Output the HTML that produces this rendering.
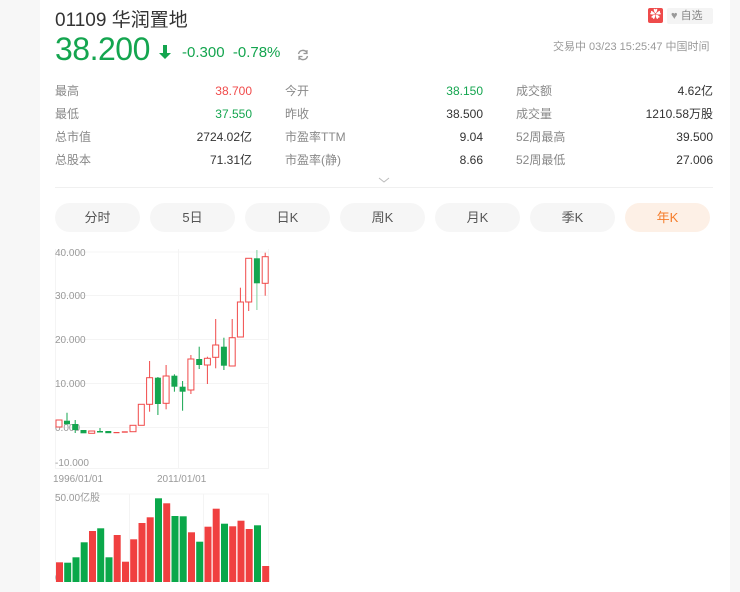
<!DOCTYPE html>
<html><head><meta charset="utf-8"><style>
*{margin:0;padding:0;box-sizing:border-box}
body{width:740px;height:592px;background:#f7f7f7;font-family:"Liberation Sans","Noto Sans CJK SC",sans-serif;position:relative;overflow:hidden}
.card{position:absolute;left:40px;top:0;width:690px;height:592px;background:#fff}
.abs{position:absolute;white-space:nowrap}
.g{color:#14a54f}.r{color:#f04a4a}
.lab{color:#888;font-size:12px;line-height:16px;height:16px}
.val{color:#333;font-size:12px;text-align:right;line-height:16px;height:16px}
.tab{position:absolute;top:203px;width:85px;height:29px;border-radius:15px;background:#f6f6f6;color:#555;font-size:13px;text-align:center;line-height:29px}
</style></head><body>
<div class="card"></div>
<div class="abs" style="left:55px;top:5px;font-size:19px;color:#333">01109 华润置地</div>
<div class="abs g" style="left:55px;top:31px;font-size:32px;letter-spacing:-0.5px">38.200</div>
<svg class="abs" style="left:158px;top:44px" width="14" height="16"><path d="M5 1h4v8h4l-6 6-6-6h4z" fill="#14a54f"/></svg>
<div class="abs g" style="left:182px;top:44px;font-size:15px">-0.300&nbsp;&nbsp;-0.78%</div>
<svg class="abs" style="left:296px;top:48px" width="14" height="14"><path d="M2.5 6A4.5 4.5 0 0 1 11 5M11.5 8A4.5 4.5 0 0 1 3 9" stroke="#999" stroke-width="1.4" fill="none"/><path d="M11 2v3.5H7.5M3 12V8.5h3.5" stroke="#999" stroke-width="1.2" fill="none"/></svg>
<div class="abs" style="left:648px;top:8px;width:15px;height:15px;background:#ee4b4b;border-radius:2px;color:#fff;font-size:11px;text-align:center;line-height:15px">✿</div>
<div class="abs" style="left:667px;top:8px;width:46px;height:16px;background:#f4f4f4;border-radius:2px;color:#888;font-size:11px;line-height:16px;padding-left:4px"><span style="color:#999">♥</span> 自选</div>
<div class="abs" style="left:553px;top:38px;font-size:11px;color:#999">交易中 03/23 15:25:47 中国时间</div>

<div class="abs lab" style="left:55px;top:83px">最高</div><div class="abs val" style="left:152px;top:83px;width:100px;color:#f04a4a">38.700</div>
<div class="abs lab" style="left:55px;top:106px">最低</div><div class="abs val" style="left:152px;top:106px;width:100px;color:#14a54f">37.550</div>
<div class="abs lab" style="left:55px;top:129px">总市值</div><div class="abs val" style="left:152px;top:129px;width:100px">2724.02亿</div>
<div class="abs lab" style="left:55px;top:152px">总股本</div><div class="abs val" style="left:152px;top:152px;width:100px">71.31亿</div>

<div class="abs lab" style="left:285px;top:83px">今开</div><div class="abs val" style="left:383px;top:83px;width:100px;color:#14a54f">38.150</div>
<div class="abs lab" style="left:285px;top:106px">昨收</div><div class="abs val" style="left:383px;top:106px;width:100px">38.500</div>
<div class="abs lab" style="left:285px;top:129px">市盈率TTM</div><div class="abs val" style="left:383px;top:129px;width:100px">9.04</div>
<div class="abs lab" style="left:285px;top:152px">市盈率(静)</div><div class="abs val" style="left:383px;top:152px;width:100px">8.66</div>

<div class="abs lab" style="left:516px;top:83px">成交额</div><div class="abs val" style="left:613px;top:83px;width:100px">4.62亿</div>
<div class="abs lab" style="left:516px;top:106px">成交量</div><div class="abs val" style="left:593px;top:106px;width:120px">1210.58万股</div>
<div class="abs lab" style="left:516px;top:129px">52周最高</div><div class="abs val" style="left:613px;top:129px;width:100px">39.500</div>
<div class="abs lab" style="left:516px;top:152px">52周最低</div><div class="abs val" style="left:613px;top:152px;width:100px">27.006</div>

<svg class="abs" style="left:378px;top:176px" width="12" height="8"><path d="M1 2l5 4 5-4" stroke="#bbb" fill="none"/></svg>
<div class="abs" style="left:55px;top:187px;width:658px;height:1px;background:#f0f0f0"></div>

<div class="tab" style="left:55px">分时</div>
<div class="tab" style="left:150px">5日</div>
<div class="tab" style="left:245px">日K</div>
<div class="tab" style="left:340px">周K</div>
<div class="tab" style="left:435px">月K</div>
<div class="tab" style="left:530px">季K</div>
<div class="tab" style="left:625px;background:#fdf0e6;color:#f57c2a">年K</div>

<svg class="abs" style="left:0;top:0" width="740" height="592" font-family="Liberation Sans,sans-serif">
<g stroke="#f4f4f4" stroke-width="1" fill="none">
<line x1="55" y1="252" x2="269" y2="252"/><line x1="55" y1="295.5" x2="269" y2="295.5"/><line x1="55" y1="339.5" x2="269" y2="339.5"/><line x1="55" y1="383.5" x2="269" y2="383.5"/><line x1="55" y1="427.5" x2="269" y2="427.5"/><line x1="55" y1="468.5" x2="269" y2="468.5"/>
<line x1="55.5" y1="249" x2="55.5" y2="469"/><line x1="178.5" y1="249" x2="178.5" y2="469"/><line x1="268.5" y1="249" x2="268.5" y2="469"/>
<line x1="55" y1="494" x2="269" y2="494"/><line x1="55.5" y1="494" x2="55.5" y2="582"/><line x1="129.5" y1="494" x2="129.5" y2="582"/><line x1="203.5" y1="494" x2="203.5" y2="582"/><line x1="268.5" y1="494" x2="268.5" y2="582"/>
</g>
<g fill="#999" font-size="10">
<text x="55" y="256">40.000</text><text x="55" y="299">30.000</text><text x="55" y="343">20.000</text><text x="55" y="387">10.000</text><text x="55" y="431">0.000</text><text x="55" y="466">-10.000</text>
<text x="53" y="482">1996/01/01</text><text x="157" y="482">2011/01/01</text>
<text x="55" y="501">50.00亿股</text><text x="55" y="581">0</text>
</g>
<g stroke-width="1">
<rect x="56" y="420" width="6" height="7" fill="#fff" stroke="#f04a4a"/>
<line x1="67" y1="412.7" x2="67" y2="420.7" stroke="#14a54f"/><rect x="64" y="420.7" width="6" height="3.6" fill="#14a54f"/>
<line x1="75.2" y1="420" x2="75.2" y2="433" stroke="#14a54f"/><rect x="72.2" y="424" width="6" height="6" fill="#14a54f"/>
<rect x="80.5" y="430" width="6" height="3.3" fill="#14a54f"/>
<rect x="88.7" y="431" width="6" height="2.3" fill="#fff" stroke="#f04a4a"/>
<line x1="100" y1="428" x2="100" y2="432" stroke="#14a54f"/><rect x="97" y="431" width="6" height="1.5" fill="#14a54f"/>
<rect x="105.3" y="431" width="6" height="2.2" fill="#14a54f"/>
<rect x="113.5" y="432" width="6" height="1.2" fill="#f04a4a"/>
<rect x="121.8" y="431.3" width="6" height="1.4" fill="#f04a4a"/>
<rect x="130" y="425.3" width="6" height="6.4" fill="#fff" stroke="#f04a4a"/>
<rect x="138.3" y="404.3" width="6" height="21" fill="#fff" stroke="#f04a4a"/>
<line x1="149.6" y1="361" x2="149.6" y2="411.7" stroke="#f04a4a"/><rect x="146.6" y="377.7" width="6" height="26.6" fill="#fff" stroke="#f04a4a"/>
<line x1="157.9" y1="377" x2="157.9" y2="415" stroke="#14a54f"/><rect x="154.9" y="377.7" width="6" height="26.3" fill="#14a54f"/>
<line x1="166.1" y1="365" x2="166.1" y2="409.3" stroke="#f04a4a"/><rect x="163.1" y="376" width="6" height="27.3" fill="#fff" stroke="#f04a4a"/>
<line x1="174.4" y1="374.3" x2="174.4" y2="391.7" stroke="#14a54f"/><rect x="171.4" y="375.7" width="6" height="11" fill="#14a54f"/>
<line x1="182.6" y1="381" x2="182.6" y2="410.7" stroke="#14a54f"/><rect x="179.6" y="386.7" width="6" height="5" fill="#14a54f"/>
<line x1="190.9" y1="355" x2="190.9" y2="394" stroke="#f04a4a"/><rect x="187.9" y="359" width="6" height="31" fill="#fff" stroke="#f04a4a"/>
<line x1="199.2" y1="346.7" x2="199.2" y2="369" stroke="#14a54f"/><rect x="196.2" y="359" width="6" height="6" fill="#14a54f"/>
<line x1="207.4" y1="356.7" x2="207.4" y2="384" stroke="#f04a4a"/><rect x="204.4" y="358.3" width="6" height="6.7" fill="#fff" stroke="#f04a4a"/>
<line x1="215.7" y1="319" x2="215.7" y2="368.3" stroke="#f04a4a"/><rect x="212.7" y="345" width="6" height="12.3" fill="#fff" stroke="#f04a4a"/>
<line x1="223.9" y1="337.7" x2="223.9" y2="370" stroke="#14a54f"/><rect x="220.9" y="346.7" width="6" height="19" fill="#14a54f"/>
<line x1="232.2" y1="319" x2="232.2" y2="337.7" stroke="#f04a4a"/><rect x="229.2" y="337.7" width="6" height="28.3" fill="#fff" stroke="#f04a4a"/>
<line x1="240.4" y1="287.7" x2="240.4" y2="302" stroke="#f04a4a"/><rect x="237.4" y="302" width="6" height="35" fill="#fff" stroke="#f04a4a"/>
<line x1="248.7" y1="302" x2="248.7" y2="311" stroke="#f04a4a"/><rect x="245.7" y="258.3" width="6" height="43.7" fill="#fff" stroke="#f04a4a"/>
<line x1="256.9" y1="250" x2="256.9" y2="310" stroke="#7fd19f"/><rect x="253.9" y="258.3" width="6" height="25" fill="#14a54f"/>
<line x1="265.2" y1="252.7" x2="265.2" y2="295.7" stroke="#f04a4a"/><rect x="262.2" y="256.7" width="6" height="26.6" fill="#fff" stroke="#f04a4a"/>
</g>
<g>
<rect x="56" y="562.3" width="7" height="19.7" fill="#f04040"/>
<rect x="64.2" y="562.7" width="7" height="19.3" fill="#0aa84a"/>
<rect x="72.5" y="557.3" width="7" height="24.7" fill="#0aa84a"/>
<rect x="80.7" y="542.3" width="7" height="39.7" fill="#0aa84a"/>
<rect x="89" y="531" width="7" height="51" fill="#f04040"/>
<rect x="97.2" y="528.3" width="7" height="53.7" fill="#0aa84a"/>
<rect x="105.5" y="557.3" width="7" height="24.7" fill="#0aa84a"/>
<rect x="113.7" y="535" width="7" height="47" fill="#f04040"/>
<rect x="122" y="561.7" width="7" height="20.3" fill="#f04040"/>
<rect x="130.2" y="539.3" width="7" height="42.7" fill="#f04040"/>
<rect x="138.5" y="523" width="7" height="59" fill="#f04040"/>
<rect x="146.7" y="517.3" width="7" height="64.7" fill="#f04040"/>
<rect x="155" y="498.3" width="7" height="83.7" fill="#0aa84a"/>
<rect x="163.2" y="503.3" width="7" height="78.7" fill="#f04040"/>
<rect x="171.5" y="516" width="7" height="66" fill="#0aa84a"/>
<rect x="179.7" y="516.3" width="7" height="65.7" fill="#0aa84a"/>
<rect x="188" y="532.3" width="7" height="49.7" fill="#f04040"/>
<rect x="196.2" y="541.7" width="7" height="40.3" fill="#0aa84a"/>
<rect x="204.5" y="526.7" width="7" height="55.3" fill="#f04040"/>
<rect x="212.7" y="508.7" width="7" height="73.3" fill="#f04040"/>
<rect x="221" y="523.7" width="7" height="58.3" fill="#0aa84a"/>
<rect x="229.2" y="526.3" width="7" height="55.7" fill="#f04040"/>
<rect x="237.5" y="520.7" width="7" height="61.3" fill="#f04040"/>
<rect x="245.7" y="529" width="7" height="53" fill="#f04040"/>
<rect x="254" y="525.3" width="7" height="56.7" fill="#0aa84a"/>
<rect x="262.2" y="566" width="7" height="16" fill="#f04040"/>
</g>
</svg>
</body></html>
